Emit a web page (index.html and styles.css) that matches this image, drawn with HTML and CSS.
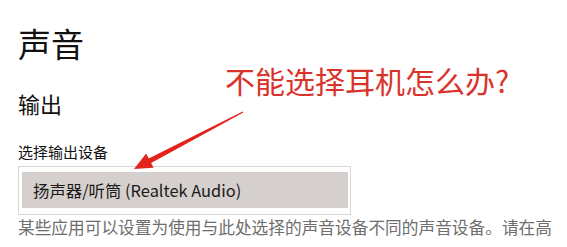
FILE: index.html
```html
<!DOCTYPE html>
<html lang="zh-CN">
<head>
<meta charset="utf-8">
<title>声音</title>
<link rel="stylesheet" href="styles.css">
</head>
<body>
<main class="page">
  <h1 class="title">声音</h1>
  <h2 class="section">输出</h2>
  <div class="label">选择输出设备</div>
  <div class="select">
    <div class="select-inner">扬声器/听筒 (Realtek Audio)</div>
  </div>
  <p class="desc">某些应用可以设置为使用与此处选择的声音设备不同的声音设备。请在高</p>

  <div class="note">不能选择耳机怎么办?</div>
  <svg class="arrow" width="567" height="247" viewBox="0 0 567 247" aria-hidden="true">
    <polygon points="243.3,112.6 151.1,162.9 153.6,167.8 134,169 146.2,153.6 148.7,158.5 242.7,111.4" fill="#e3221c"/>
  </svg>
</main>
</body>
</html>
```

FILE: styles.css
```css
html, body {
  margin: 0;
  padding: 0;
  background: #ffffff;
}

.page {
  position: relative;
  width: 567px;
  height: 247px;
  overflow: hidden;
  padding: 27px 0 0 18px;
  box-sizing: border-box;
  font-family: "Noto Sans CJK SC", "Noto Sans", sans-serif;
  color: #111111;
}

.title {
  margin: 0;
  font-size: 33px;
  line-height: 33px;
  font-weight: 400;
}

.section {
  margin: 32px 0 0 0;
  font-size: 22px;
  line-height: 22px;
  font-weight: 400;
}

.label {
  margin-top: 30px;
  font-size: 15px;
  line-height: 15px;
}

.select {
  margin-top: 7px;
  width: 333px;
  height: 49px;
  box-sizing: border-box;
  border: 1px solid #d6d6d6;
  background: #ffffff;
  padding: 5px 2px 0 3px;
}

.select-inner {
  height: 36px;
  background: #d5d0cd;
  display: flex;
  align-items: center;
  padding-left: 11px;
  font-size: 16.4px;
  color: #1a1a1a;
}

.desc {
  margin: 2px 0 0 0;
  font-size: 16.7px;
  line-height: 20px;
  color: #6e6e6e;
  white-space: nowrap;
}

.note {
  position: absolute;
  left: 225px;
  top: 65px;
  font-size: 30px;
  line-height: 30px;
  color: #d8342b;
  white-space: nowrap;
}

.arrow {
  position: absolute;
  left: 0;
  top: 0;
}
```
